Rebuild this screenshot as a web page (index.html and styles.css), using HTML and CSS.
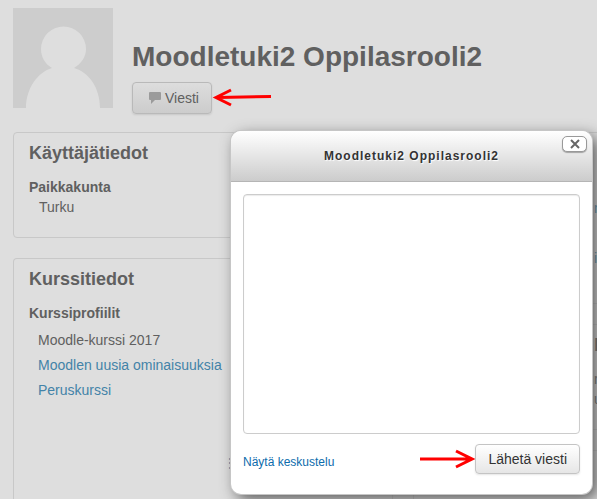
FILE: index.html
```html
<!DOCTYPE html>
<html lang="fi">
  <head>
    <meta charset="UTF-8" />
    <meta name="viewport" content="width=device-width, initial-scale=1.0" />
    <title>Moodletuki2 Oppilasrooli2</title>
    <link rel="stylesheet" href="styles.css">
  </head>
  <body>
    <div class="page">
      <header class="profile-header">
        <svg class="avatar" viewBox="0 0 100 100" role="img" aria-label="Moodletuki2 Oppilasrooli2">
          <rect width="100" height="100" fill="#cdcdcd" />
          <path d="M13 100C13 80 25 64 39 60C32 56 28 49 28 41A22.500 22.500 0 0 1 73 41C73 49 68 56 61 60C76 64 87 80 87 100Z" fill="#dedede" />
        </svg>
        <div class="profile-heading">
          <h1>Moodletuki2 Oppilasrooli2</h1>
          <div class="header-actions">
            <button type="button" class="btn btn-message">
              <svg class="icon-message" viewBox="0 0 12 12" aria-hidden="true">
                <path d="M1 0H11Q12 0 12 1V7Q12 8 11 8H6L2 12V8H1Q0 8 0 7V1Q0 0 1 0Z" fill="#9b9b9b" />
              </svg>
              Viesti
            </button>
            <svg class="arrow" viewBox="0 0 60 20" aria-hidden="true">
              <path d="M59 8.500L6 9.500M19 2L4 9.500L19 17" />
            </svg>
          </div>
        </div>
      </header>

      <main class="columns">
        <div class="column">
          <section class="card">
            <h2>Käyttäjätiedot</h2>
            <dl>
              <dt>Paikkakunta</dt>
              <dd>Turku</dd>
            </dl>
          </section>
          <section class="card card-courses">
            <h2>Kurssitiedot</h2>
            <h3>Kurssiprofiilit</h3>
            <ul>
              <li>Moodle-kurssi 2017</li>
              <li><a href="#">Moodlen uusia ominaisuuksia</a></li>
              <li><a href="#">Peruskurssi</a></li>
            </ul>
            <a class="more" href="#">⋮</a>
          </section>
        </div>
        <div class="column">
          <section class="card card-side card-links">
            <a href="#">n</a>
            <a href="#">in</a>
          </section>
          <section class="card card-side card-activity">
            <h2>b</h2>
            <p>rs<br>u</p>
          </section>
          <section class="card card-side"></section>
        </div>
      </main>
    </div>

    <div class="dialog" role="dialog" aria-labelledby="dialog-title">
      <div class="dialog-header">
        <h2 id="dialog-title">Moodletuki2 Oppilasrooli2</h2>
        <button type="button" class="dialog-close" aria-label="Sulje">
          <svg viewBox="0 0 10 10" aria-hidden="true"><path d="M1 1L9 9M9 1L1 9" /></svg>
        </button>
      </div>
      <form class="dialog-body">
        <textarea aria-label="Viesti"></textarea>
        <div class="dialog-footer">
          <a href="#">Näytä keskustelu</a>
          <svg class="arrow" viewBox="0 0 60 20" aria-hidden="true">
            <path d="M5 10H56M41 2L57 10L41 18" />
          </svg>
          <button type="submit" class="btn">Lähetä viesti</button>
        </div>
      </form>
    </div>
  </body>
</html>
```
FILE: styles.css
```css
* {
  box-sizing: border-box;
}
body {
  margin: 0;
  height: 100vh;
  overflow: hidden;
  background: #dedede;
  color: #606060;
  font-family: "Liberation Sans", Arial, sans-serif;
  font-size: 14px;
  line-height: 20px;
}
h1,
h2,
h3,
dl,
dd,
ul,
p {
  margin: 0;
}
a {
  color: #4383a8;
  text-decoration: none;
}

/* profile header */
.page {
  display: flex;
  flex-direction: column;
  min-height: 100vh;
  padding: 8px 13px 0;
}
.profile-header {
  display: flex;
  gap: 19px;
}
.avatar {
  width: 100px;
  height: 100px;
}
.profile-heading {
  padding-top: 29px;
}
h1 {
  font-size: 28px;
  line-height: 40px;
}
.header-actions {
  display: flex;
  align-items: center;
  margin-top: 5px;
}
.btn {
  height: 30px;
  padding: 0 12px;
  border: 1px solid #c4c4c4;
  border-radius: 4px;
  background: linear-gradient(#ffffff, #e6e6e6);
  box-shadow: 0 1px 2px rgba(0, 0, 0, 0.1);
  color: #333;
  font: inherit;
}
.btn-message {
  display: flex;
  align-items: center;
  gap: 4px;
  height: 32px;
  padding: 0 12px 0 16px;
  border-color: #b9b9b9;
  background: linear-gradient(#dddddd, #cccccc);
  color: #606060;
}
.icon-message {
  width: 12px;
  height: 12px;
}
.arrow {
  width: 60px;
  height: 20px;
  fill: none;
  stroke: #f00;
  stroke-width: 3;
}

/* profile cards */
.columns {
  display: grid;
  flex: 1;
  grid-template-columns: 380px 380px;
  gap: 20px;
  margin-top: 18px;
}
.column {
  display: flex;
  flex-direction: column;
  gap: 20px;
}
.card {
  padding: 10px 15px 20px;
  border: 1px solid #c8c8c8;
  border-radius: 4px;
}
.card h2 {
  margin-bottom: 14px;
  font-size: 18px;
  line-height: 20px;
}
.card h3,
.card dt {
  font-size: 14px;
  font-weight: bold;
}
.card dd {
  margin-left: 10px;
}
.card:last-child {
  flex: 1;
  border-bottom: 0;
  border-radius: 4px 4px 0 0;
}
.card ul {
  padding: 5px 0 0 9px;
  list-style: none;
}
.card li {
  line-height: 25px;
}
.more {
  display: block;
  margin: 50px 0 0 194px;
}
.card-side {
  padding-left: 180px;
}
.card-links {
  display: flex;
  flex-direction: column;
  gap: 30px;
  height: 172px;
  padding-top: 65px;
}
.card-activity {
  height: 106px;
}

/* message dialog */
.dialog {
  position: absolute;
  top: 131px;
  right: 5px;
  bottom: 5px;
  left: 231px;
  display: flex;
  flex-direction: column;
  border-radius: 10px;
  background: #fff;
  box-shadow: 0 0 0 1px #c6c6c6, 5px 5px 15px #555;
}
.dialog-header {
  position: relative;
  height: 51px;
  border-bottom: 1px solid #b5b5b5;
  border-radius: 10px 10px 0 0;
  background: linear-gradient(#ffffff, #cccccc);
}
.dialog-header h2 {
  color: #333;
  font-size: 12px;
  line-height: 50px;
  letter-spacing: 1px;
  text-align: center;
  text-shadow: 1px 1px 1px #fff;
}
.dialog-close {
  position: absolute;
  top: 5px;
  right: 5px;
  display: flex;
  align-items: center;
  justify-content: center;
  width: 25px;
  height: 16px;
  padding: 0;
  border: 1px solid #999;
  border-radius: 5px;
  background: #fff;
  box-shadow: 0 1px 1px rgba(0, 0, 0, 0.3);
}
.dialog-close svg {
  width: 10px;
  height: 10px;
  stroke: #666;
  stroke-width: 2;
}
.dialog-body {
  display: flex;
  flex: 1;
  flex-direction: column;
  gap: 10px;
  padding: 12px 12px 20px;
}
.dialog-body textarea {
  flex: 1;
  width: 100%;
  padding: 4px 6px;
  border: 1px solid #ccc;
  border-radius: 4px;
  box-shadow: inset 0 1px 1px rgba(0, 0, 0, 0.08);
  font: inherit;
  resize: none;
}
.dialog-footer {
  display: flex;
  align-items: center;
}
.dialog-footer a {
  margin-right: auto;
  padding-top: 5px;
  color: #0d6cac;
  font-size: 12px;
}
```
